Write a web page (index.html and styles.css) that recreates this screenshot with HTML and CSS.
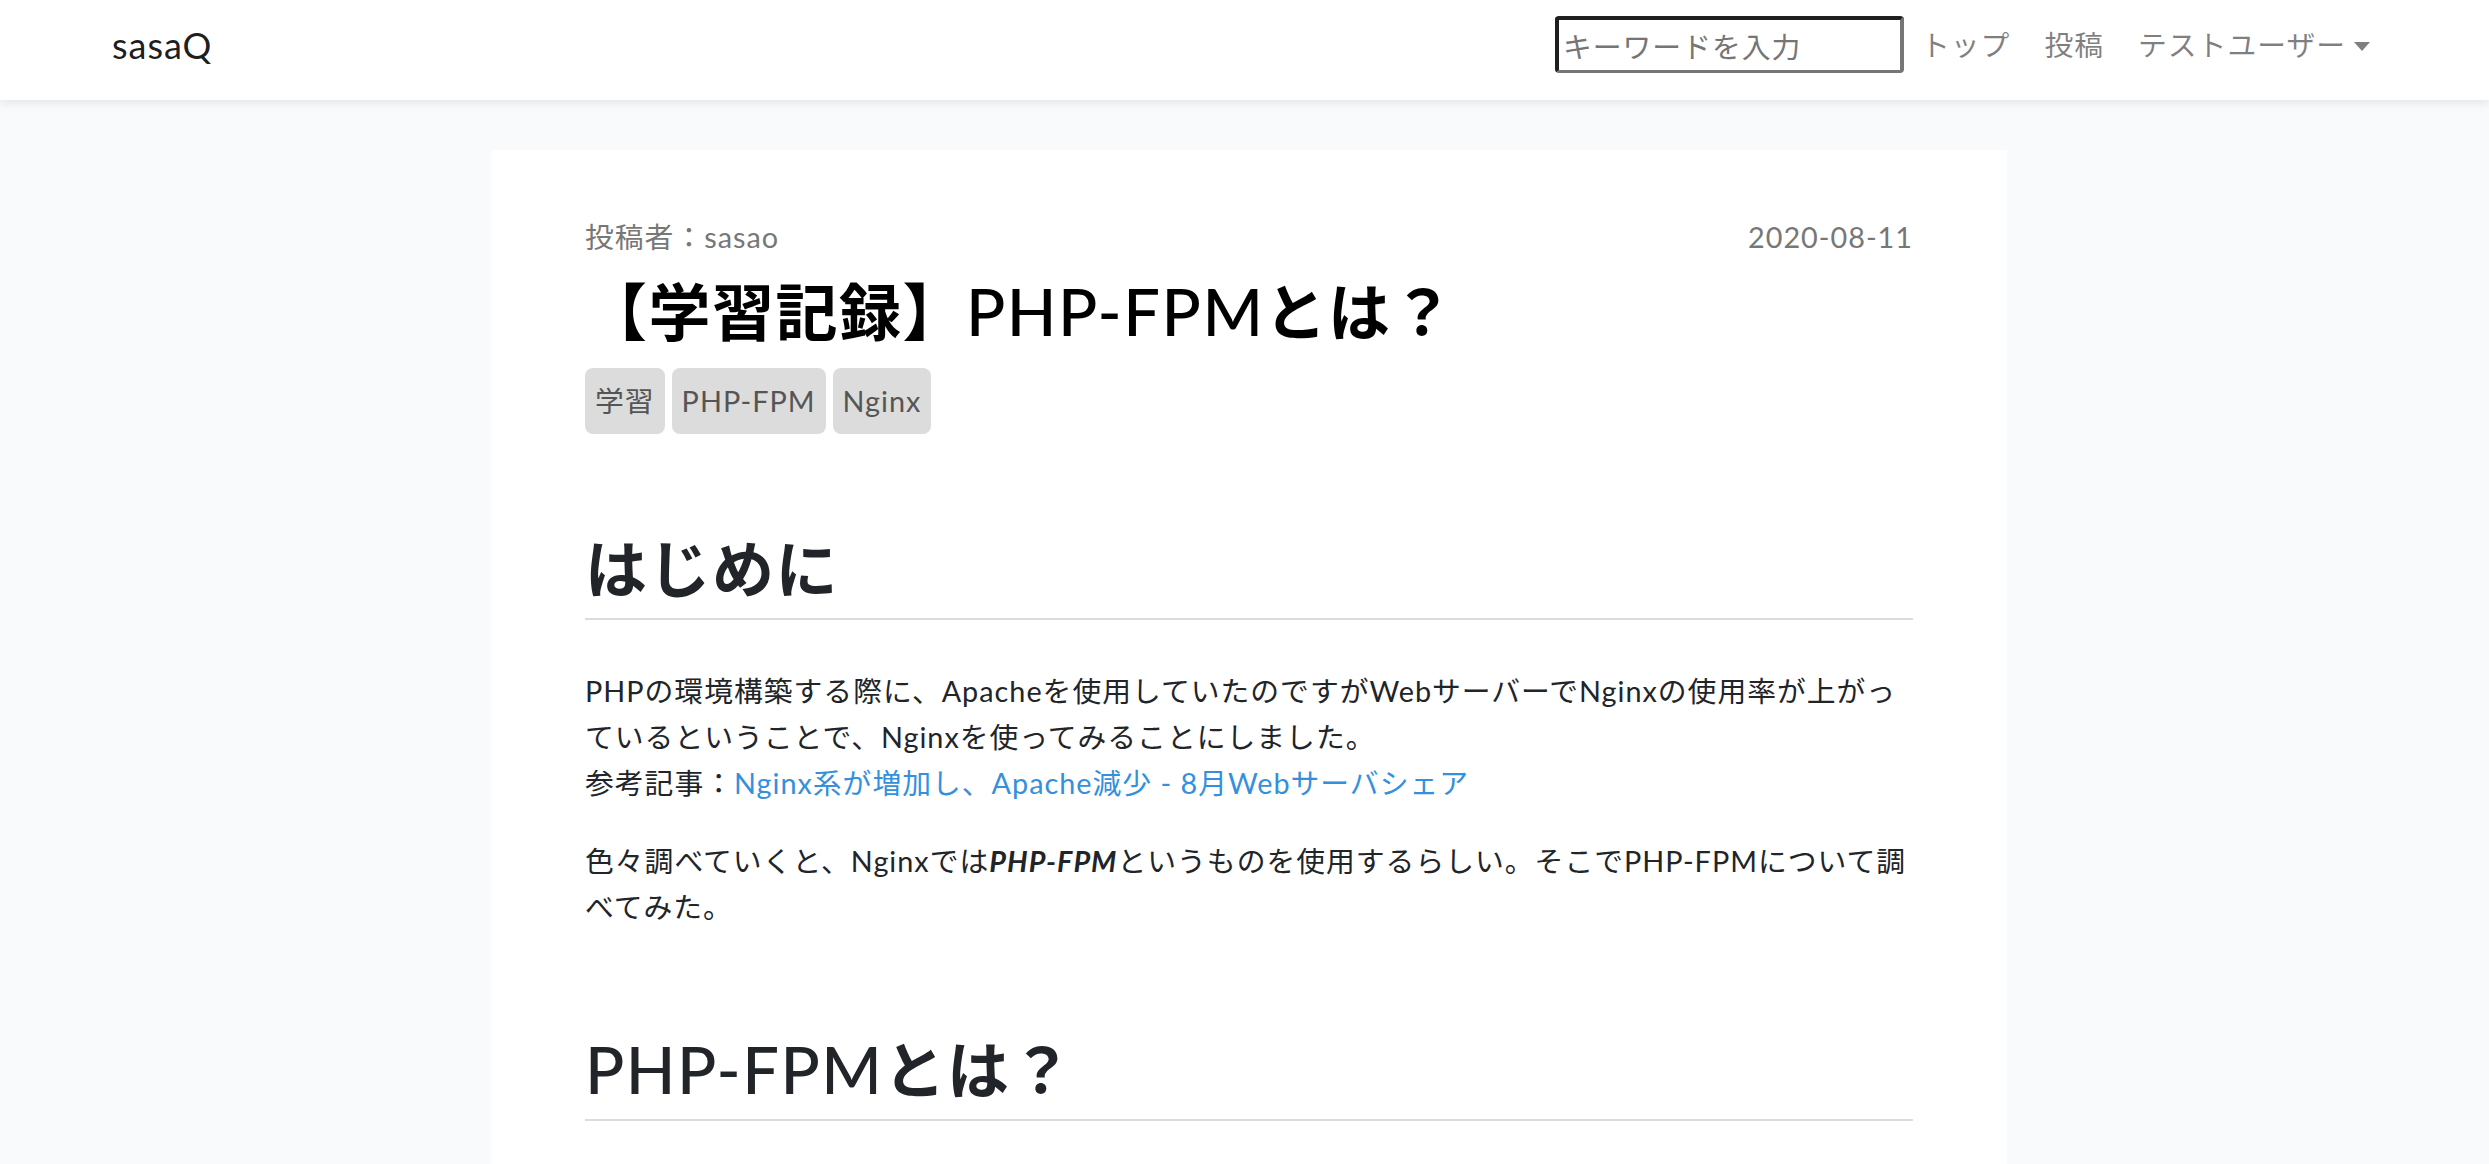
FILE: index.html
```html
<!DOCTYPE html>
<html lang="ja">
<head>
<meta charset="utf-8">
<title>sasaQ</title>
<link rel="stylesheet" href="styles.css">
</head>
<body>
<nav class="navbar">
  <a class="brand" href="#">sasaQ</a>
  <div class="nav-right">
    <input class="search" type="text" placeholder="キーワードを入力">
    <a class="nav-link" href="#">トップ</a>
    <a class="nav-link" href="#">投稿</a>
    <a class="nav-link dropdown" href="#">テストユーザー</a>
  </div>
</nav>
<main class="main">
  <article class="card">
    <div class="meta">
      <span>投稿者：sasao</span>
      <span>2020-08-11</span>
    </div>
    <h1 class="title"><span class="ja">【学習記録】</span>PHP-FPM<span class="ja">とは？</span></h1>
    <div class="tags">
      <span class="tag">学習</span>
      <span class="tag">PHP-FPM</span>
      <span class="tag">Nginx</span>
    </div>
    <h2 class="section"><span class="ja">はじめに</span></h2>
    <p>PHPの環境構築する際に、Apacheを使用していたのですがWebサーバーでNginxの使用率が上がっているということで、Nginxを使ってみることにしました。<br>参考記事：<a class="link" href="#">Nginx系が増加し、Apache減少 - 8月Webサーバシェア</a></p>
    <p>色々調べていくと、Nginxでは<strong><em>PHP-FPM</em></strong>というものを使用するらしい。そこでPHP-FPMについて調べてみた。</p>
    <h2 class="section">PHP-FPM<span class="ja">とは？</span></h2>
  </article>
</main>
</body>
</html>
```
FILE: styles.css
```css
html, body {
  margin: 0;
  padding: 0;
}
body {
  background: #f8fafc;
  color: #212529;
  font-family: "Lato", "Noto Sans CJK JP", sans-serif;
  font-size: 28.8px;
  line-height: 46px;
  letter-spacing: 1px;
}
.navbar {
  height: 100px;
  box-sizing: border-box;
  background: #fff;
  box-shadow: 0 4px 8px rgba(0, 0, 0, 0.075);
  display: flex;
  align-items: center;
  padding: 0 102px 11px 112px;
  position: relative;
  z-index: 1;
}
.brand {
  font-size: 36px;
  color: rgba(0, 0, 0, 0.9);
  text-decoration: none;
}
.nav-right {
  margin-left: auto;
  display: flex;
  align-items: center;
}
.search {
  width: 349px;
  height: 57px;
  box-sizing: border-box;
  border-style: solid;
  border-width: 4px 4px 3px 4px;
  border-color: #1f1f1f #767676 #767676 #1f1f1f;
  border-radius: 4px;
  padding: 0 4px;
  font-family: "Noto Sans CJK JP", sans-serif;
  font-size: 28.8px;
  letter-spacing: 1px;
  color: #212529;
  outline: none;
}
.search::placeholder {
  color: #757575;
}
.nav-link {
  padding: 0 17px;
  color: rgba(0, 0, 0, 0.5);
  text-decoration: none;
}
.dropdown::after {
  content: "";
  display: inline-block;
  margin-left: 8px;
  vertical-align: 5px;
  border-top: 9px solid;
  border-left: 8px solid transparent;
  border-right: 8px solid transparent;
}
.main {
  display: flex;
  justify-content: center;
  padding: 50px 0 0 9px;
}
.card {
  width: 1516px;
  box-sizing: border-box;
  background: #fff;
  padding: 64px 94px 120px;
}
.meta {
  display: flex;
  justify-content: space-between;
  color: #777;
}
.title {
  margin: 14px 0 19px;
  font-size: 65px;
  line-height: 74px;
  font-weight: 500;
  letter-spacing: 1.5px;
  color: #000;
}
.ja {
  font-size: 62px;
  font-weight: 700;
}
.tags {
  display: flex;
  gap: 7px;
}
.tag {
  background: #dcdcdc;
  color: #555;
  border-radius: 8px;
  padding: 10px 10px;
  line-height: 46px;
}
.section {
  margin: 102px 0 48px;
  font-size: 65px;
  line-height: 74px;
  font-weight: 500;
  letter-spacing: 1.5px;
  padding-bottom: 12px;
  border-bottom: 2px solid #dcdcdc;
  color: #212529;
}
.tags + .section {
  margin-top: 97px;
}
p {
  margin: 0 0 32px;
}
.link {
  color: #3490dc;
  text-decoration: none;
}
```
